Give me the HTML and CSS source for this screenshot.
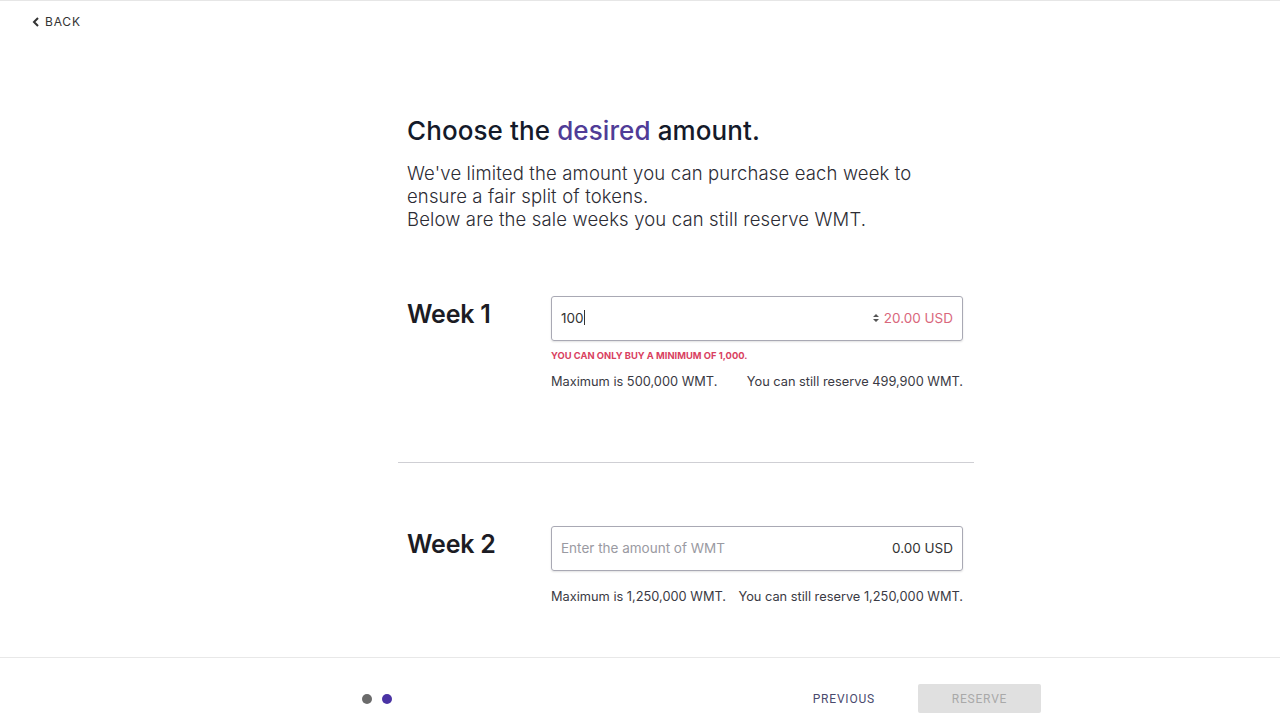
FILE: index.html
```html
<!DOCTYPE html>
<html lang="en">
<head>
    <meta charset="UTF-8">
    <meta name="viewport" content="width=device-width, initial-scale=1.0">
    <title>Choose amount</title>
    <link rel="stylesheet" href="styles.css">
</head>
<body>
    <div class="page">
        <a class="back" href="#">
            <svg width="8" height="10" viewBox="0 0 8 10"><path d="M6 1 L2 5 L6 9" fill="none" stroke="#333" stroke-width="2"/></svg>
            BACK
        </a>

        <main class="content">
            <h1>Choose the <span class="accent">desired</span> amount.</h1>
            <p class="intro">We've limited the amount you can purchase each week to ensure a fair split of tokens.<br>Below are the sale weeks you can still reserve WMT.</p>

            <section class="week">
                <h2>Week 1</h2>
                <div class="field">
                    <div class="input error">
                        <span class="value">100<span class="caret"></span></span>
                        <svg class="spin" width="8" height="12" viewBox="0 0 8 12"><path d="M1 5 L4 2 L7 5 Z M1 7 L4 10 L7 7 Z" fill="#555"/></svg>
                        <span class="usd">20.00 USD</span>
                    </div>
                    <div class="err-msg">You can only buy a minimum of 1,000.</div>
                    <div class="info">
                        <span>Maximum is 500,000 WMT.</span>
                        <span>You can still reserve 499,900 WMT.</span>
                    </div>
                </div>
            </section>

            <hr class="divider">

            <section class="week week-two">
                <h2>Week 2</h2>
                <div class="field">
                    <div class="input">
                        <span class="placeholder">Enter the amount of WMT</span>
                        <span class="usd">0.00 USD</span>
                    </div>
                    <div class="info">
                        <span>Maximum is 1,250,000 WMT.</span>
                        <span>You can still reserve 1,250,000 WMT.</span>
                    </div>
                </div>
            </section>
        </main>
    </div>

    <footer class="footer">
        <div class="footer-inner">
            <div class="dots">
                <span class="dot"></span>
                <span class="dot active"></span>
            </div>
            <div class="actions">
                <button class="btn-prev">PREVIOUS</button>
                <button class="btn-reserve" disabled>RESERVE</button>
            </div>
        </div>
    </footer>
</body>
</html>
```

FILE: styles.css
```css
* {
    box-sizing: border-box;
}

body {
    margin: 0;
    font-family: Inter, "Open Sans", sans-serif;
    color: #1c1c28;
    background: #fff;
    height: 720px;
    overflow: hidden;
    border-top: 1px solid #e6e6e6;
}

.page {
    height: 656px;
}

.back {
    display: inline-flex;
    align-items: center;
    gap: 5px;
    margin: 13px 0 0 32px;
    font-size: 12px;
    letter-spacing: 0.8px;
    color: #333;
    text-decoration: none;
}

.content {
    width: 576px;
    margin-left: 398px;
    padding: 0 9px;
}

h1 {
    margin: 84px 0 0;
    font-size: 26px;
    font-weight: 500;
    letter-spacing: 0.1px;
    color: #141a2a;
}

.accent {
    color: #503c97;
}

.intro {
    margin: 16px 0 0;
    font-size: 18.5px;
    line-height: 23px;
    font-weight: 300;
    color: #2c2c34;
    letter-spacing: 0.15px;
}

.week {
    display: flex;
    margin-top: 65px;
}

.week h2 {
    width: 144px;
    margin: 0;
    padding-top: 3px;
    font-size: 25px;
    font-weight: 600;
    color: #1c1c24;
    letter-spacing: -0.2px;
}

.field {
    width: 412px;
}

.input {
    display: flex;
    align-items: center;
    height: 45px;
    padding: 0 9px;
    border: 1px solid #a9a9b4;
    border-radius: 3px;
    box-shadow: 0 1px 2px rgba(0, 0, 0, 0.12);
    font-size: 13.5px;
}

.value {
    flex: 1;
    color: #333;
}

.caret {
    display: inline-block;
    width: 1px;
    height: 15px;
    background: #333;
    vertical-align: -2px;
}

.spin {
    margin-right: 4px;
}

.placeholder {
    flex: 1;
    color: #9a9aa2;
}

.usd {
    color: #333;
}

.error .usd {
    color: #d9677c;
}

.err-msg {
    margin-top: 9px;
    font-size: 9.4px;
    font-weight: 700;
    text-transform: uppercase;
    color: #d9415f;
}

.info {
    display: flex;
    justify-content: space-between;
    margin-top: 13px;
    font-size: 12.8px;
    color: #3a3a44;
}

.week-two .info {
    margin-top: 18px;
}

.divider {
    margin: 73px 0 0 -9px;
    width: 576px;
    border: none;
    border-top: 1px solid #cfcfd4;
}

.week-two {
    margin-top: 63px;
}

.footer {
    border-top: 1px solid #e8e8e8;
}

.footer-inner {
    display: flex;
    align-items: center;
    justify-content: space-between;
    width: 679px;
    margin-left: 362px;
    padding-top: 26px;
}

.dots {
    display: flex;
    gap: 10px;
}

.dot {
    width: 10px;
    height: 10px;
    border-radius: 50%;
    background: #6b6b6b;
}

.dot.active {
    background: #4a33a4;
}

.actions {
    display: flex;
    align-items: center;
    gap: 43px;
}

button {
    font-family: Roboto, sans-serif;
    font-size: 12px;
    letter-spacing: 0.8px;
    border: none;
    cursor: pointer;
}

.btn-prev {
    background: none;
    color: #4a4a6e;
    padding: 0;
}

.btn-reserve {
    width: 123px;
    height: 29px;
    background: #e0e0e0;
    color: #a9a9a9;
    border-radius: 2px;
    cursor: default;
}
```
